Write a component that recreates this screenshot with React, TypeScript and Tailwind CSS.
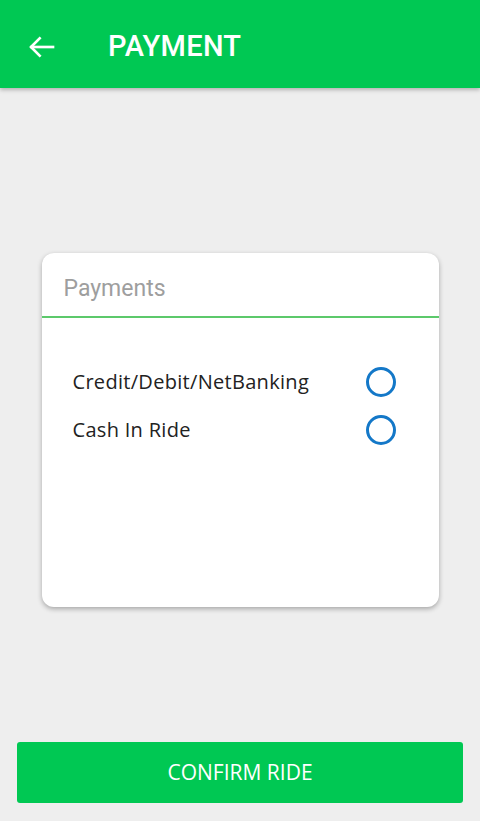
import React from "react";

function Radio() {
  return (
    <div className="w-[30px] h-[30px] rounded-full border-[3px] border-[#1478c8]" />
  );
}

export default function App() {
  return (
    <div className="w-[480px] h-[821px] bg-[#eeeeee] flex flex-col" style={{ fontFamily: "Roboto, sans-serif" }}>
      <div className="h-[88px] bg-[#00c853] flex items-center pt-[5px] shadow-[0_2px_4px_rgba(0,0,0,0.25)] shrink-0 relative z-10">
        <svg className="ml-[25px]" width="32" height="32" viewBox="0 0 24 24" fill="none" stroke="white" strokeWidth="2" strokeLinecap="square">
          <path d="M21 12H5" />
          <path d="M11 5.5L4.5 12L11 18.5" />
        </svg>
        <div className="ml-[51px] text-white text-[29px] font-medium tracking-[0.3px]">PAYMENT</div>
      </div>
      <div className="flex-1 flex flex-col items-center">
        <div className="mt-[165px] w-[397px] h-[354px] bg-white rounded-[12px] shadow-[0_2px_5px_rgba(0,0,0,0.3)] flex flex-col overflow-hidden">
          <div className="h-[65px] flex items-center pl-[22px] pt-[10px] text-[23px] text-[#9e9e9e] border-b-2 border-[#5cc96b] shrink-0">
            Payments
          </div>
          <div className="flex flex-col pt-[49px] pl-[31px] pr-[43px] gap-[18px]" style={{ fontFamily: "'Open Sans', sans-serif" }}>
            <div className="flex items-center justify-between h-[30px]">
              <span className="text-[20px] tracking-[0.3px] text-[#222]">Credit/Debit/NetBanking</span>
              <Radio />
            </div>
            <div className="flex items-center justify-between h-[30px]">
              <span className="text-[20px] tracking-[0.3px] text-[#222]">Cash In Ride</span>
              <Radio />
            </div>
          </div>
        </div>
        <div className="mt-auto mb-[18px] w-[446px] h-[61px] bg-[#00c853] rounded-[3px] flex items-center justify-center text-white text-[21px]" style={{ fontFamily: "'Open Sans', sans-serif" }}>
          CONFIRM RIDE
        </div>
      </div>
    </div>
  );
}
